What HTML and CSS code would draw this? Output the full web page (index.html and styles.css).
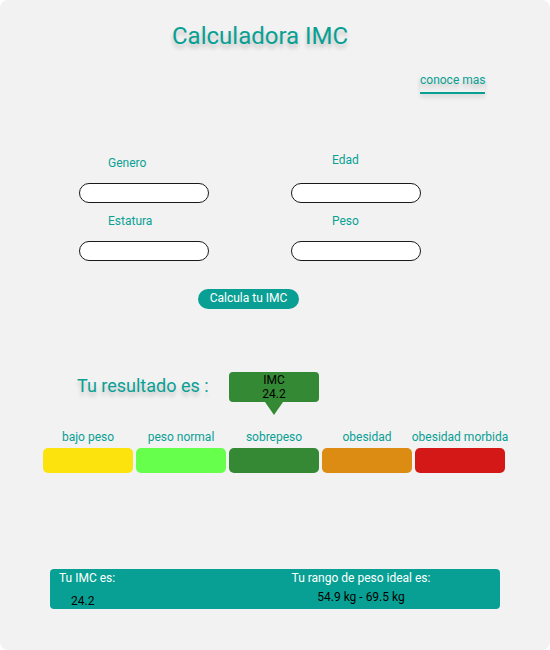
FILE: index.html
```html
<!DOCTYPE html>
<html lang="es">
<head>
<meta charset="utf-8">
<title>Calculadora IMC</title>
<link rel="stylesheet" href="styles.css">
</head>
<body>
<div class="page">
  <h1 class="title">Calculadora IMC</h1>
  <div class="more-row"><a class="more-link">conoce mas</a></div>

  <form class="form">
    <div class="field">
      <label class="field-label">Genero</label>
      <input class="field-input" type="text">
    </div>
    <div class="field field--right">
      <label class="field-label field-label--high">Edad</label>
      <input class="field-input" type="text">
    </div>
    <div class="field">
      <label class="field-label">Estatura</label>
      <input class="field-input" type="text">
    </div>
    <div class="field field--right">
      <label class="field-label">Peso</label>
      <input class="field-input" type="text">
    </div>
  </form>

  <div class="btn-row"><button class="calc-btn" type="button">Calcula tu IMC</button></div>

  <div class="result-row">
    <span class="result-label">Tu resultado es :</span>
    <div class="imc-tip"><span>IMC</span><span>24.2</span></div>
  </div>

  <div class="scale">
    <div class="scale-item"><span class="scale-label">bajo peso</span><div class="scale-bar bar-under"></div></div>
    <div class="scale-item"><span class="scale-label">peso normal</span><div class="scale-bar bar-normal"></div></div>
    <div class="scale-item"><span class="scale-label">sobrepeso</span><div class="scale-bar bar-over"></div></div>
    <div class="scale-item"><span class="scale-label">obesidad</span><div class="scale-bar bar-obese"></div></div>
    <div class="scale-item"><span class="scale-label">obesidad morbida</span><div class="scale-bar bar-morbid"></div></div>
  </div>

  <div class="summary">
    <div class="summary-col">
      <span class="summary-title">Tu IMC es:</span>
      <span class="summary-value summary-value--imc">24.2</span>
    </div>
    <div class="summary-col summary-col--range">
      <span class="summary-title">Tu rango de peso ideal es:</span>
      <span class="summary-value summary-value--range">54.9 kg - 69.5 kg</span>
    </div>
  </div>
</div>
</body>
</html>
```

FILE: styles.css
```css
* { box-sizing: border-box; }

html, body {
  margin: 0;
  padding: 0;
  background: #ffffff;
}

body {
  font-family: Roboto, "Noto Sans", Arial, sans-serif;
  color: #09a094;
}

.page {
  width: 550px;
  height: 650px;
  background: #f2f2f2;
  border-radius: 8px;
  display: flex;
  flex-direction: column;
  overflow: hidden;
}

.title {
  margin: 22px 0 0 172px;
  font-size: 24px;
  line-height: 28px;
  font-weight: 400;
  color: #09a094;
  text-shadow: 0 4px 4px rgba(0, 0, 0, 0.2);
}

.more-row {
  margin-top: 23px;
  padding-left: 420px;
  display: flex;
}

.more-link {
  display: inline-block;
  font-size: 12px;
  line-height: 14px;
  padding-bottom: 5px;
  border-bottom: 2px solid #09a094;
  color: #09a094;
  text-shadow: 0 4px 4px rgba(0, 0, 0, 0.2);
  box-shadow: 0 4px 4px rgba(0, 0, 0, 0.08);
}

.form {
  margin: 62px 0 0 79px;
  display: grid;
  grid-template-columns: 130px 130px;
  column-gap: 82px;
  row-gap: 11px;
}

.field {
  display: flex;
  flex-direction: column;
}

.field-label {
  display: block;
  font-size: 12px;
  line-height: 14px;
  padding-left: 29px;
  margin-bottom: 13px;
  color: #09a094;
}

.field--right .field-label {
  padding-left: 41px;
}

.field-label--high {
  margin-top: -3px;
  margin-bottom: 16px;
}

.field-input {
  display: block;
  width: 130px;
  height: 20px;
  border: 1px solid #1a1a1a;
  border-radius: 10px;
  background: #ffffff;
  padding: 0 10px;
  font-family: inherit;
  font-size: 12px;
  outline: none;
}

.btn-row {
  margin-top: 28px;
  padding-left: 198px;
  display: flex;
}

.calc-btn {
  height: 20px;
  width: 101px;
  padding: 0 0 2px;
  border: none;
  border-radius: 10px;
  background: #0a9f94;
  color: #ffffff;
  font-family: inherit;
  font-size: 12px;
  line-height: 18px;
  text-align: center;
}

.result-row {
  margin-top: 63px;
  display: flex;
  align-items: flex-start;
}

.result-label {
  width: 229px;
  padding-left: 77px;
  margin-top: 3px;
  font-size: 18px;
  line-height: 21px;
  color: #09a094;
  text-shadow: 0 4px 4px rgba(0, 0, 0, 0.2);
}

.imc-tip {
  position: relative;
  width: 90px;
  height: 30px;
  background: #348934;
  border-radius: 4px;
  display: flex;
  flex-direction: column;
  align-items: center;
  color: #000000;
  font-size: 12px;
  line-height: 14px;
  padding-top: 1px;
}

.imc-tip::after {
  content: "";
  position: absolute;
  left: 36px;
  top: 30px;
  border-left: 9px solid transparent;
  border-right: 9px solid transparent;
  border-top: 13px solid #348934;
}

.scale {
  margin: 28px 0 0 43px;
  display: grid;
  grid-template-columns: repeat(5, 90px);
  column-gap: 3px;
}

.scale-item {
  display: flex;
  flex-direction: column;
  align-items: center;
}

.scale-label {
  font-size: 12px;
  line-height: 14px;
  white-space: nowrap;
  color: #09a094;
  margin-bottom: 4px;
}

.scale-bar {
  width: 90px;
  height: 25px;
  border-radius: 5px;
}

.bar-under  { background: #fce30e; }
.bar-normal { background: #66ff4b; }
.bar-over   { background: #358935; }
.bar-obese  { background: #dc8c12; }
.bar-morbid { background: #d41717; }

.summary {
  margin: 96px 0 0 50px;
  width: 450px;
  height: 40px;
  background: #08a094;
  border-radius: 4px;
  display: grid;
  grid-template-columns: 200px 204px;
  padding: 2px 0 0 9px;
}

.summary-col {
  display: flex;
  flex-direction: column;
  font-size: 12px;
  line-height: 14px;
}

.summary-col--range {
  align-items: center;
}

.summary-title {
  color: #ffffff;
  white-space: nowrap;
}

.summary-value {
  color: #000000;
  white-space: nowrap;
}

.summary-value--imc {
  margin-top: 9px;
  padding-left: 12px;
}

.summary-value--range {
  margin-top: 5px;
}
```
